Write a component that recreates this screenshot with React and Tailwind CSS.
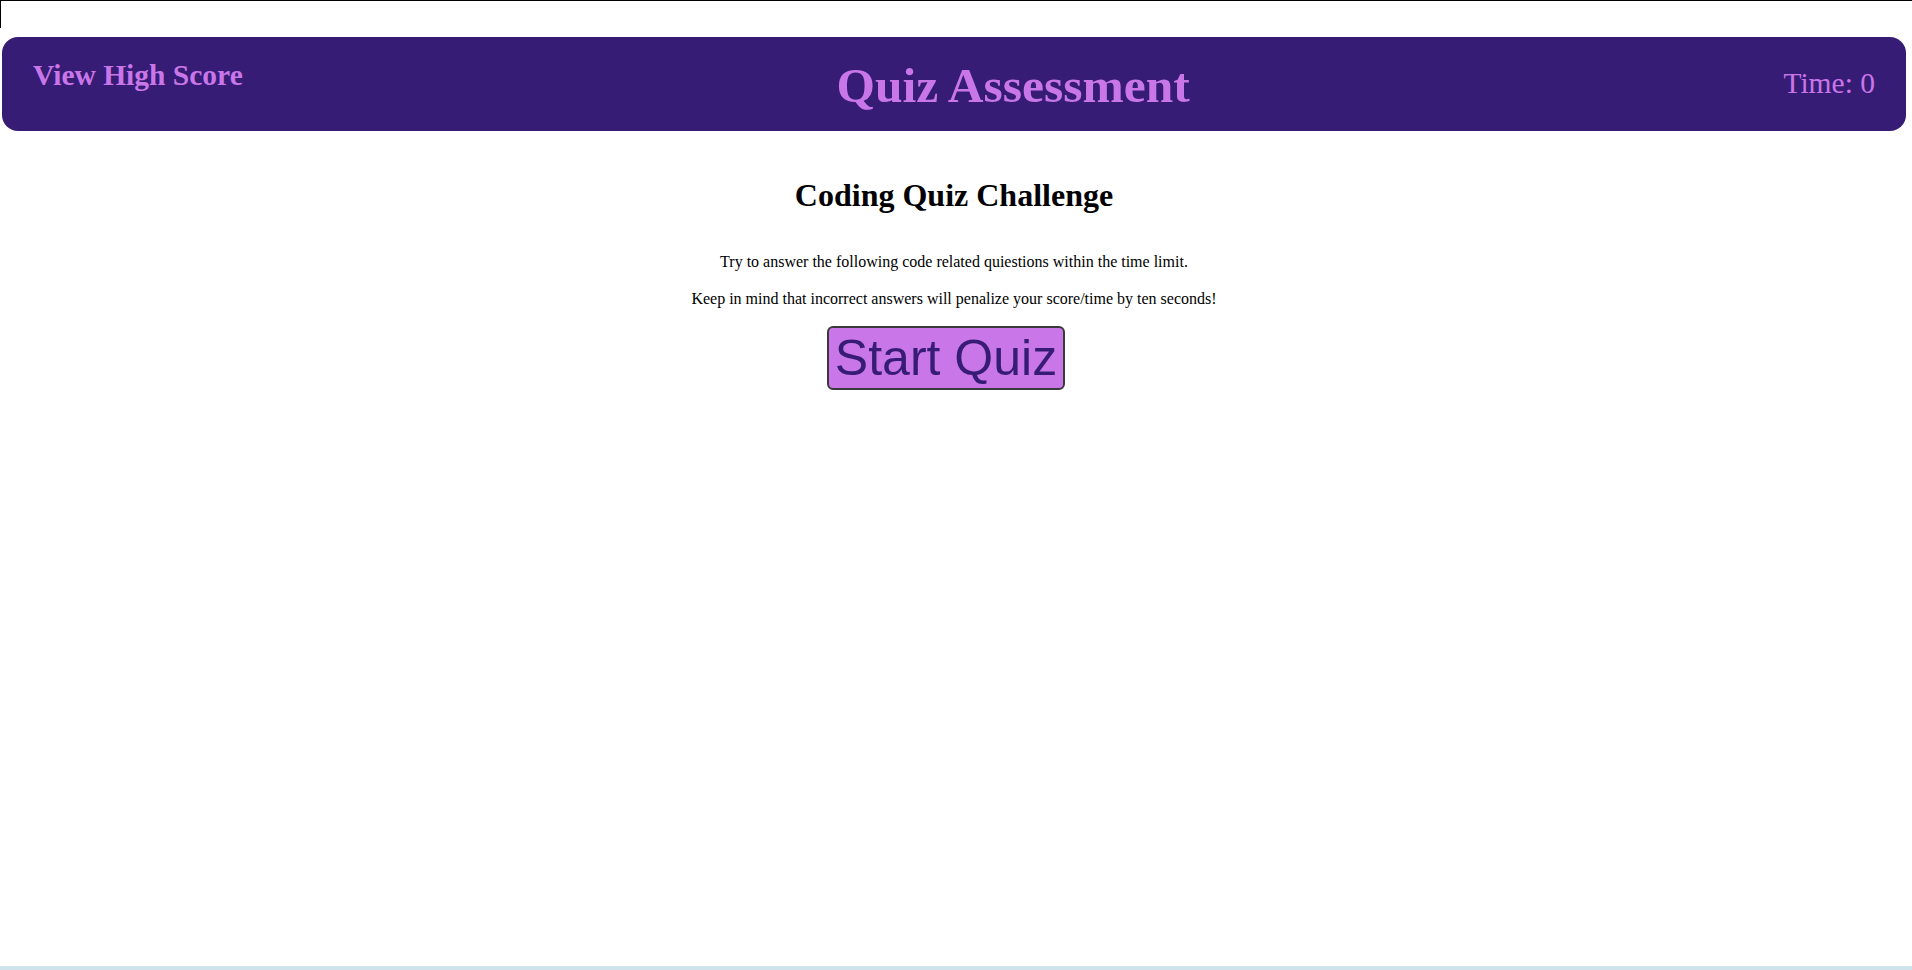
export default function App() {
  const serif = { fontFamily: '"Liberation Serif", "Times New Roman", serif' };
  return (
    <div className="flex h-[970px] flex-col bg-white" style={serif}>
      <div className="h-[28px] shrink-0 border-l border-t border-black" />
      <header className="mt-[9px] ml-[2px] mr-[6px] flex h-[94px] shrink-0 items-start justify-between rounded-[16px] bg-[#371c76] px-[31px] pt-[22px] text-[#c876e8]">
        <a className="text-[29.5px] font-bold leading-[normal]">View High Score</a>
        <h1 className="-mt-[2px] text-[49.5px] font-bold leading-[normal]">Quiz Assessment</h1>
        <p className="mt-[8px] text-[29.5px] leading-[normal]">Time: 0</p>
      </header>
      <main className="flex flex-col items-center pr-[4px] text-black">
        <h2 className="mt-[46px] text-[32px] font-bold leading-[normal]">Coding Quiz Challenge</h2>
        <p className="mt-[39px] text-[16px] leading-[normal]">Try to answer the following code related quiestions within the time limit.</p>
        <p className="mt-[19px] text-[16px] leading-[normal]">Keep in mind that incorrect answers will penalize your score/time by ten seconds!</p>
        <button
          className="mr-[16px] mt-[18px] rounded-[6px] border-2 border-[#3a3a3a] bg-[#c876e8] px-[6px] py-[1px] text-[50px] leading-[normal] text-[#371c76]"
          style={{ fontFamily: '"Liberation Sans", Arial, sans-serif' }}
        >
          Start Quiz
        </button>
      </main>
      <div className="flex-1" />
      <div className="h-[4px] shrink-0 bg-[#cfe3ed]" />
    </div>
  );
}
